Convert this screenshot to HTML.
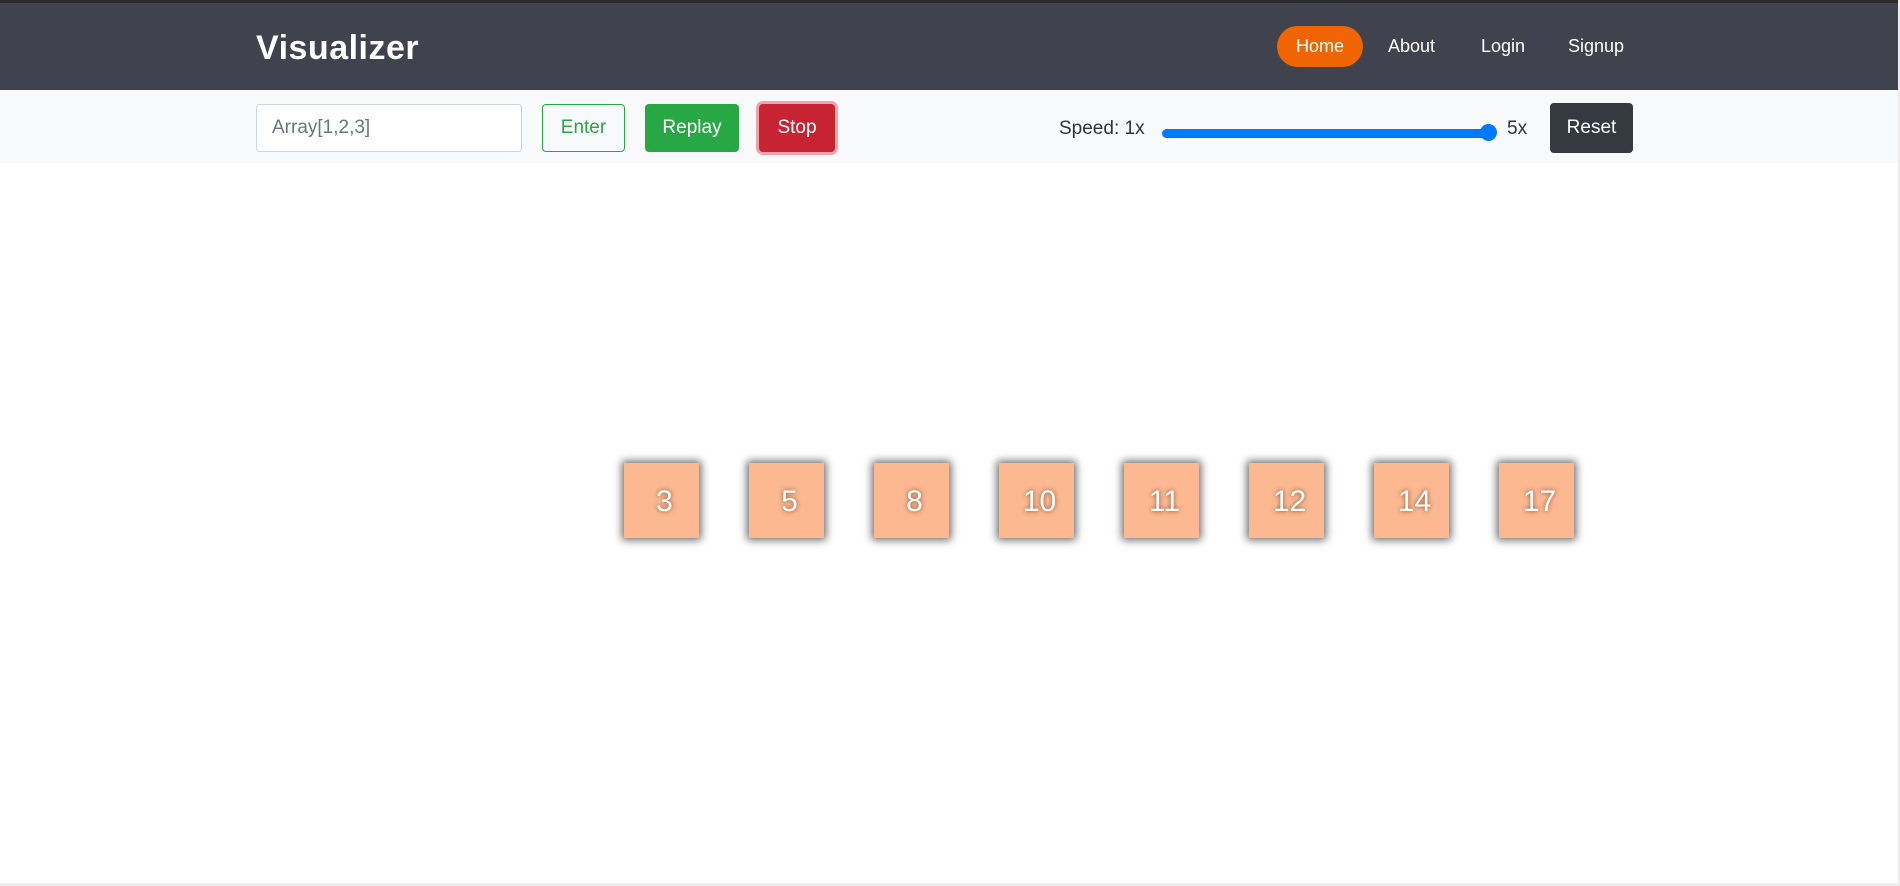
<!DOCTYPE html>
<html><head><meta charset="utf-8"><style>
*{box-sizing:border-box;margin:0;padding:0}
body{width:1900px;height:886px;background:#fff;font-family:"Liberation Sans",sans-serif;position:relative;overflow:hidden}
.top{position:absolute;left:0;top:0;width:1900px;height:3px;background:#2b2b2f}
.hdr{position:absolute;left:0;top:3px;width:1898px;height:87px;background:#40424e}
.logo{position:absolute;left:256px;top:29px;color:#fff;font-weight:bold;font-size:34px;letter-spacing:0.5px}
.nav{position:absolute;top:26px;color:#fff;font-size:18px;line-height:41px}
.home{left:1277px;width:86px;background:#f06502;border-radius:21px;text-align:center}
.bar{position:absolute;left:0;top:90px;width:1898px;height:73px;background:#f8f9fa}
.el{position:absolute;font-size:19px;display:flex;align-items:center;justify-content:center;border-radius:4px}
.inp{left:256px;top:104px;width:266px;height:48px;background:#fff;border:1px solid #ced4da;color:#6c757d;justify-content:flex-start;padding-left:15px}
.ent{left:542px;top:104px;width:83px;height:48px;border:1px solid #28a745;color:#28a745}
.rep{left:645px;top:104px;width:94px;height:48px;background:#28a745;color:#fff}
.stop{left:759px;top:104px;width:76px;height:48px;background:#c82333;color:#fff;box-shadow:0 0 0 3px #eea3aa}
.txt{position:absolute;font-size:19px;color:#333;top:118px}
.track{position:absolute;left:1162px;top:129px;width:330px;height:9px;background:#007bff;border-radius:5px}
.thumb{position:absolute;left:1480px;top:124px;width:17px;height:17px;background:#007bff;border-radius:50%}
.reset{left:1550px;top:103px;width:83px;height:50px;background:#343a40;color:#fff}
.box{position:absolute;top:463px;width:75px;height:75px;background:#fbb891;box-shadow:0 0 8px 2px rgba(0,0,0,.6);color:#fff;font-size:30px;display:flex;align-items:center;justify-content:center;padding-left:6px;padding-top:3px;text-shadow:0 0 5px rgba(120,60,30,.9)}
.bot{position:absolute;left:0;top:883px;width:1900px;height:3px;background:#eee}
.rgt{position:absolute;left:1898px;top:0;width:2px;height:886px;background:#eee}
</style></head><body>
<div class="top"></div>
<div class="hdr"></div>
<div class="logo">Visualizer</div>
<div class="nav home">Home</div>
<div class="nav" style="left:1388px">About</div>
<div class="nav" style="left:1481px">Login</div>
<div class="nav" style="left:1568px">Signup</div>
<div class="bar"></div>
<div class="el inp">Array[1,2,3]</div>
<div class="el ent">Enter</div>
<div class="el rep">Replay</div>
<div class="el stop">Stop</div>
<div class="txt" style="left:1059px">Speed: 1x</div>
<div class="track"></div><div class="thumb"></div>
<div class="txt" style="left:1507px">5x</div>
<div class="el reset">Reset</div>
<div class="box" style="left:624px">3</div>
<div class="box" style="left:749px">5</div>
<div class="box" style="left:874px">8</div>
<div class="box" style="left:999px">10</div>
<div class="box" style="left:1124px">11</div>
<div class="box" style="left:1249px">12</div>
<div class="box" style="left:1374px">14</div>
<div class="box" style="left:1499px">17</div>
<div class="bot"></div><div class="rgt"></div>
</body></html>
